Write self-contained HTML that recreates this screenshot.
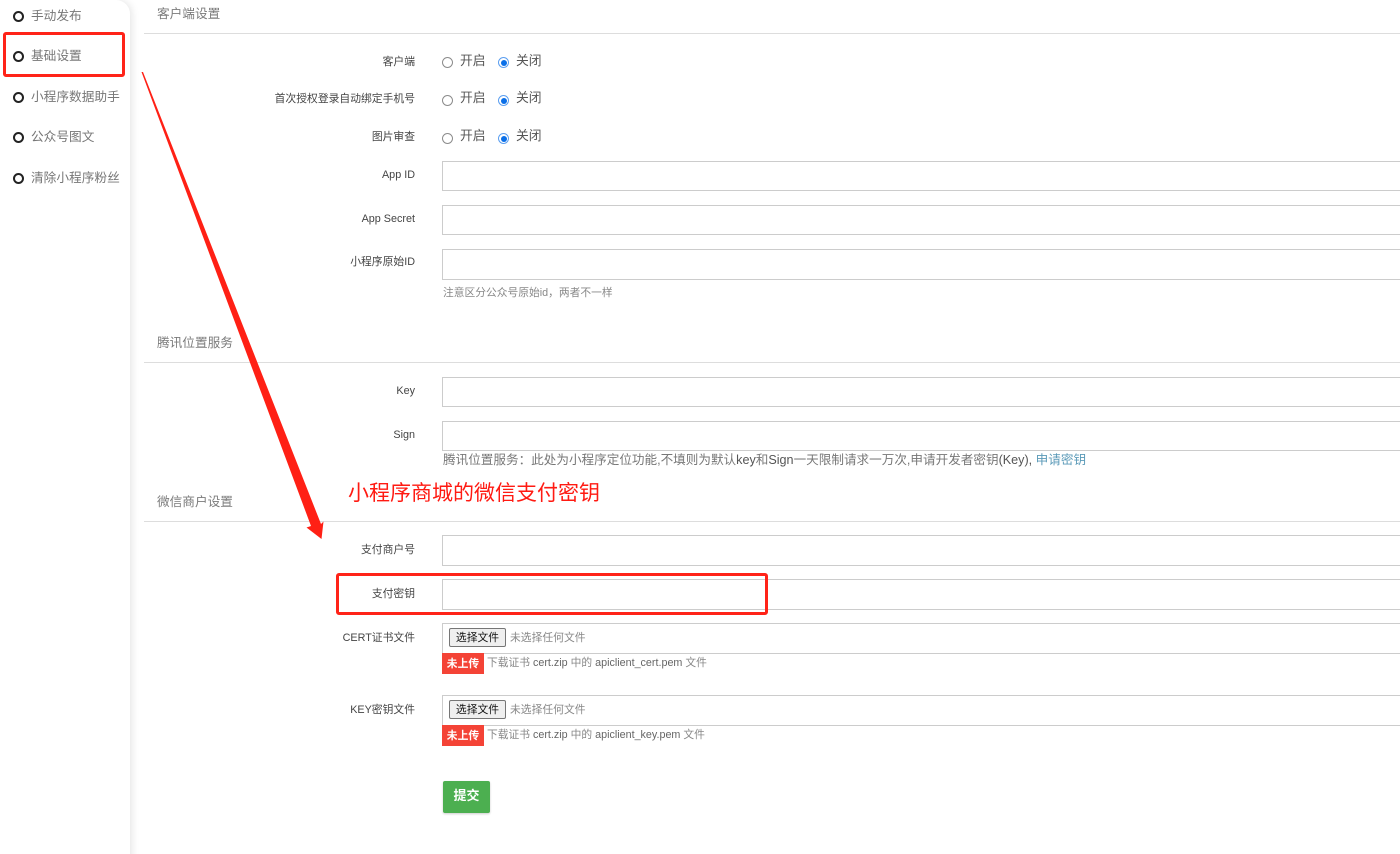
<!DOCTYPE html>
<html lang="zh-CN">
<head>
<meta charset="utf-8">
<title>基础设置</title>
<style>
html,body{margin:0;padding:0;width:1400px;height:854px;overflow:hidden;background:#fff}
body{position:relative;font-family:"Liberation Sans","Noto Sans CJK SC",sans-serif;color:#333}
.a{position:absolute;white-space:nowrap}
.side{position:absolute;left:0;top:0;width:130px;height:870px;background:#fff;border-radius:0 14px 0 0;box-shadow:2px 0 8px rgba(0,0,0,.1)}
.dot{position:absolute;left:13px;width:7px;height:7px;border:2px solid #222;border-radius:50%}
.nav{position:absolute;left:31px;font-size:12.7px;line-height:18px;color:#777;white-space:nowrap}
.title{position:absolute;left:157px;font-size:12.67px;line-height:18px;color:#7b7b7b;white-space:nowrap}
.hr{position:absolute;left:144px;width:1256px;height:1px;background:#ddd}
.lab{position:absolute;left:200px;width:215px;text-align:right;font-size:10.8px;line-height:16px;color:#444;white-space:nowrap}
.inp{position:absolute;left:442px;width:962px;box-sizing:border-box;border:1px solid #ccc;background:#fff}
.radio{position:absolute;width:11px;height:11px;box-sizing:border-box;border-radius:50%;border:1px solid #8c8c8c;background:#fff}
.radio.on{border:1px solid #5c9ff0;background:#fff}
.radio.on:after{content:"";position:absolute;left:1.5px;top:1.5px;width:6px;height:6px;border-radius:50%;background:#0a6fe8}
.rt{position:absolute;font-size:12.8px;line-height:16px;color:#555;white-space:nowrap}
.help{position:absolute;font-size:10.75px;line-height:14px;color:#888;white-space:nowrap}
.help b{font-weight:normal;color:#666}
.btn{position:absolute;left:449px;width:57px;height:19px;box-sizing:border-box;border:1px solid #767676;border-radius:2px;background:#efefef;font-size:10.8px;line-height:19px;text-align:center;color:#111}
.nofile{position:absolute;left:510px;font-size:10.8px;line-height:16px;color:#888;white-space:nowrap}
.bad{position:absolute;left:442px;width:42px;height:21px;background:#f44336;color:#fff;font-size:10.8px;font-weight:bold;line-height:23px;text-align:center}
.box{position:absolute;box-sizing:border-box;border:3px solid #ff2318;border-radius:3px}
.sub{position:absolute;left:443px;top:781px;width:47px;height:32px;background:#4caf50;border-radius:2px;color:#fff;font-size:13px;font-weight:bold;line-height:29px;text-align:center;box-shadow:0 1px 2px rgba(0,0,0,.2)}
svg{position:absolute;left:0;top:0}
</style>
</head>
<body>
<div class="side"></div>
<div class="dot" style="top:11px"></div><div class="nav" style="top:7px">手动发布</div>
<div class="dot" style="top:51px"></div><div class="nav" style="top:47px">基础设置</div>
<div class="dot" style="top:92px"></div><div class="nav" style="top:88px">小程序数据助手</div>
<div class="dot" style="top:132px"></div><div class="nav" style="top:128px">公众号图文</div>
<div class="dot" style="top:173px"></div><div class="nav" style="top:169px">清除小程序粉丝</div>

<div class="title" style="top:5px">客户端设置</div>
<div class="hr" style="top:33px"></div>

<div class="lab" style="top:54px">客户端</div>
<div class="radio" style="left:442px;top:57px"></div><div class="rt" style="left:460px;top:53px">开启</div>
<div class="radio on" style="left:498px;top:57px"></div><div class="rt" style="left:516px;top:53px">关闭</div>

<div class="lab" style="top:91px">首次授权登录自动绑定手机号</div>
<div class="radio" style="left:442px;top:95px"></div><div class="rt" style="left:460px;top:90px">开启</div>
<div class="radio on" style="left:498px;top:95px"></div><div class="rt" style="left:516px;top:90px">关闭</div>

<div class="lab" style="top:129px">图片审查</div>
<div class="radio" style="left:442px;top:133px"></div><div class="rt" style="left:460px;top:128px">开启</div>
<div class="radio on" style="left:498px;top:133px"></div><div class="rt" style="left:516px;top:128px">关闭</div>

<div class="lab" style="top:167px">App ID</div>
<div class="inp" style="top:161px;height:30px"></div>
<div class="lab" style="top:211px">App Secret</div>
<div class="inp" style="top:205px;height:30px"></div>
<div class="lab" style="top:254px">小程序原始ID</div>
<div class="inp" style="top:249px;height:31px"></div>
<div class="help" style="left:443px;top:286px">注意区分公众号原始id，两者不一样</div>

<div class="title" style="top:334px">腾讯位置服务</div>
<div class="hr" style="top:362px"></div>

<div class="lab" style="top:383px">Key</div>
<div class="inp" style="top:377px;height:30px"></div>
<div class="lab" style="top:427px">Sign</div>
<div class="inp" style="top:421px;height:30px"></div>
<div class="a" style="left:443px;top:452px;font-size:12.6px;line-height:16px;color:#777">腾讯位置服务：此处为小程序定位功能,不填则为默认<span style="color:#555">key</span>和<span style="color:#555">Sign</span>一天限制请求一万次,申请开发者密钥<span style="color:#555">(Key),</span> <span style="color:#5b9ab8">申请密钥</span></div>

<div class="title" style="top:493px">微信商户设置</div>
<div class="hr" style="top:521px"></div>
<div class="a" style="left:348px;top:481px;font-size:21px;line-height:26px;color:#ff1a12">小程序商城的微信支付密钥</div>

<div class="lab" style="top:542px">支付商户号</div>
<div class="inp" style="top:535px;height:31px"></div>
<div class="lab" style="top:586px">支付密钥</div>
<div class="inp" style="top:579px;height:31px"></div>

<div class="lab" style="top:630px">CERT证书文件</div>
<div class="inp" style="top:623px;height:31px"></div>
<div class="btn" style="top:628px">选择文件</div><div class="nofile" style="top:630px">未选择任何文件</div>
<div class="bad" style="top:653px">未上传</div>
<div class="help" style="left:487px;top:656px">下载证书 <b>cert.zip</b> 中的 <b>apiclient_cert.pem</b> 文件</div>

<div class="lab" style="top:702px">KEY密钥文件</div>
<div class="inp" style="top:695px;height:31px"></div>
<div class="btn" style="top:700px">选择文件</div><div class="nofile" style="top:702px">未选择任何文件</div>
<div class="bad" style="top:725px">未上传</div>
<div class="help" style="left:487px;top:728px">下载证书 <b>cert.zip</b> 中的 <b>apiclient_key.pem</b> 文件</div>

<div class="sub">提交</div>

<div class="box" style="left:3px;top:32px;width:122px;height:45px"></div>
<div class="box" style="left:336px;top:573px;width:432px;height:42px"></div>
<svg width="1400" height="854" viewBox="0 0 1400 854">
<polygon points="141.5,72 143,72 321,524 323.5,521.5 321.5,539 306.5,527.5 311,526" fill="#ff2015"/>
</svg>
</body>
</html>
